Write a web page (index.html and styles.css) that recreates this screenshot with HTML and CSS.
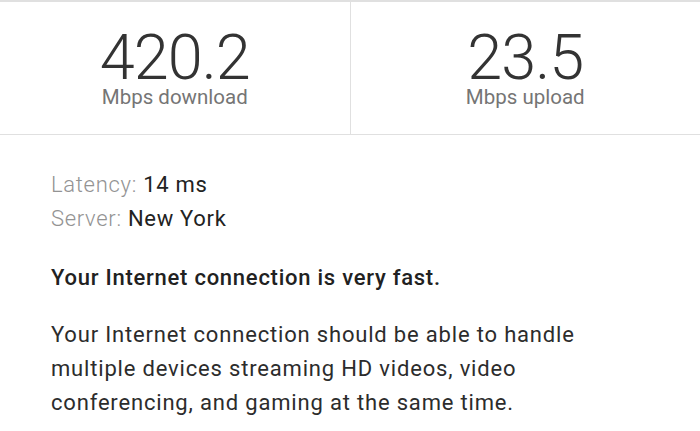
FILE: index.html
```html
<!DOCTYPE html>
<html>
<head>
<meta charset="utf-8">
<link rel="stylesheet" href="styles.css">
</head>
<body>
<div class="stats">
  <div class="stat">
    <div class="value">420.2</div>
    <div class="unit">Mbps download</div>
  </div>
  <div class="stat">
    <div class="value">23.5</div>
    <div class="unit">Mbps upload</div>
  </div>
</div>
<div class="details">
  <div class="meta">
    <div class="meta-row"><span class="label">Latency:</span> <span class="val">14 ms</span></div>
    <div class="meta-row"><span class="label">Server:</span> <span class="val">New York</span></div>
  </div>
  <p class="headline">Your Internet connection is very fast.</p>
  <p class="desc">Your Internet connection should be able to handle multiple devices streaming HD videos, video conferencing, and gaming at the same time.</p>
</div>
</body>
</html>
```

FILE: styles.css
```css
html, body {
  margin: 0;
  padding: 0;
  background: #ffffff;
  font-family: Roboto, "Liberation Sans", sans-serif;
}
.stats {
  display: flex;
  border-top: 2px solid #e0e0e0;
  border-bottom: 1px solid #e0e0e0;
  height: 135px;
  box-sizing: border-box;
}
.stat {
  flex: 1;
  text-align: center;
  padding-top: 29px;
}
.stat + .stat {
  border-left: 1px solid #e0e0e0;
}
.value {
  font-size: 63px;
  font-weight: 300;
  line-height: 54px;
  letter-spacing: -1px;
  color: #333333;
}
.unit {
  font-size: 20.5px;
  line-height: 24px;
  color: #757575;
}
.details {
  padding: 33px 0 0 51px;
  font-size: 22px;
  letter-spacing: 0.7px;
}
.meta-row {
  line-height: 34px;
  color: #222222;
}
.label {
  font-weight: 300;
  color: #939393;
}
.headline {
  margin: 25px 0 0;
  font-weight: 500;
  line-height: 34px;
  letter-spacing: 0.75px;
  color: #212121;
}
.desc {
  margin: 23px 0 0;
  line-height: 34px;
  letter-spacing: 0.82px;
  color: #2c2c2c;
  width: 570px;
}
```
